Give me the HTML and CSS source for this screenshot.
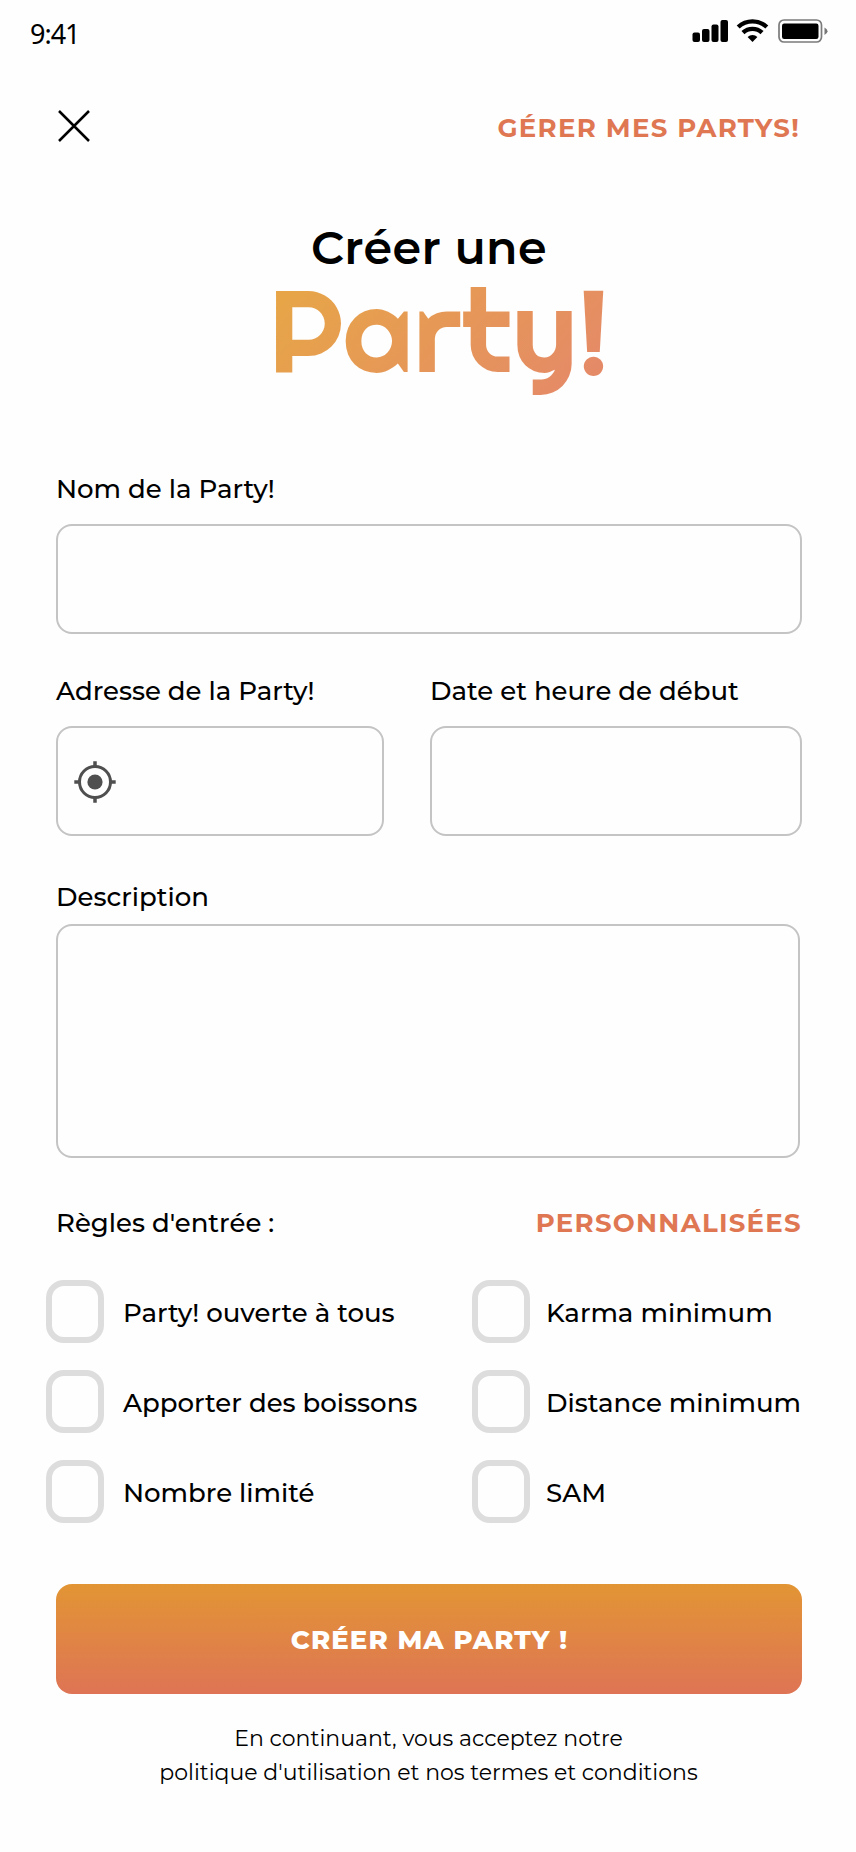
FILE: index.html
```
<!DOCTYPE html>
<html lang="fr">
<head>
<meta charset="utf-8">
<title>Créer une Party!</title>
<link rel="stylesheet" href="styles.css">
</head>
<body>
<div class="status">
  <span class="time">9:41</span>
  <svg class="status-icons" width="137" height="26" viewBox="0 0 137 26">
    <rect x="1.500" y="14.5" width="7.5" height="9.5" rx="2"/>
    <rect x="11" y="11" width="7.5" height="13" rx="2"/>
    <rect x="20.500" y="6.500" width="7" height="17.500" rx="2"/>
    <rect x="29.500" y="2" width="7.5" height="22" rx="2"/>
    <g fill="none" stroke="#000" stroke-width="4.4">
      <path d="M47.2 9a21 21 0 0 1 28.6 0"/>
      <path d="M52 14.7a13.8 13.8 0 0 1 19 0"/>
    </g>
    <path d="M61.5 24l-4.9-5a7.2 7.2 0 0 1 9.8 0z"/>
    <rect x="88" y="2" width="42.5" height="22" rx="5" fill="none" stroke="#7b7b7b" stroke-width="1.7"/>
    <rect x="91" y="5.500" width="36.5" height="15.500" rx="2.2"/>
    <path d="M133.500 9.500v7.5q3-1.3 3-3.7t-3-3.800z" fill="#777"/>
  </svg>
</div>
<main class="page">
  <header class="top">
    <svg class="close" width="34" height="32" viewBox="0 0 34 32"><path d="M2 1l30 30M32 1l-30 30" stroke="#000" stroke-width="2.5" fill="none"/></svg>
    <a class="link">GÉRER MES PARTYS!</a>
  </header>
  <h1 class="title"><span class="title-small">Créer une</span><span class="title-big">Party!</span></h1>
  <div class="field">
    <label class="label">Nom de la Party!</label>
    <div class="input"></div>
  </div>
  <div class="pair">
    <div class="field">
      <label class="label">Adresse de la Party!</label>
      <div class="input"><svg class="locate" width="42" height="42" viewBox="0 0 42 42"><g fill="none" stroke="#4f4f4f" stroke-width="3"><circle cx="21" cy="21" r="15.500"/><path d="M21 .3v6M21 35.700v6M.3 21h6M35.700 21h6" stroke-width="3.500"/></g><circle cx="21" cy="21" r="7.600" fill="#4f4f4f"/></svg></div>
    </div>
    <div class="field">
      <label class="label">Date et heure de début</label>
      <div class="input"></div>
    </div>
  </div>
  <div class="field description">
    <label class="label">Description</label>
    <div class="input area"></div>
  </div>
  <div class="rules-head"><span class="label">Règles d'entrée :</span><a class="link">PERSONNALISÉES</a></div>
  <div class="rules">
    <div class="rule"><span class="box"></span>Party! ouverte à tous</div>
    <div class="rule"><span class="box"></span>Karma minimum</div>
    <div class="rule"><span class="box"></span>Apporter des boissons</div>
    <div class="rule"><span class="box"></span>Distance minimum</div>
    <div class="rule"><span class="box"></span>Nombre limité</div>
    <div class="rule"><span class="box"></span>SAM</div>
  </div>
  <div class="button">CRÉER MA PARTY !</div>
  <p class="legal">En continuant, vous acceptez notre<br>politique d'utilisation et nos termes et conditions</p>
</main>
</body>
</html>
```

FILE: styles.css
```
* { box-sizing: border-box; }
body {
  margin: 0;
  min-height: 1852px;
  background: #fefefe;
  color: #000;
  font: 500 26px/32px Montserrat, Inter, sans-serif;
}
.status {
  display: flex;
  justify-content: space-between;
  align-items: flex-start;
  height: 110px;
  padding: 18px 28px 0 30px;
}
.time {
  font: 400 27px/32px "Noto Sans", "Open Sans", sans-serif;
  letter-spacing: -1px;
}
.page { padding: 0 54px 0 56px; }
.top {
  display: flex;
  justify-content: space-between;
  height: 32px;
}
.close { margin-left: 1px; }
.link {
  color: #e07753;
  font-weight: 700;
  letter-spacing: 1.3px;
}
.top .link { padding-top: 2px; margin-right: 2px; }
.title {
  display: flex;
  flex-direction: column;
  align-items: center;
  height: 253px;
  margin: 78px 0 0;
  font-weight: 600;
}
.title-small {
  font-size: 46px;
  line-height: 56px;
  letter-spacing: .4px;
}
.title-big {
  margin: -6px 0 0 20px;
  padding: 0 2px 10px;
  font: 400 116px/120px Righteous, Montserrat, sans-serif;
  background: linear-gradient(135deg, #e7a548 10%, #e58a67 90%);
  -webkit-background-clip: text;
  background-clip: text;
  color: transparent;
}
.field {
  display: flex;
  flex-direction: column;
  gap: 19px;
}
.input {
  display: flex;
  align-items: center;
  height: 110px;
  padding: 2px 0 0 16px;
  border: 2px solid #c4c4c4;
  border-radius: 16px;
}
.pair {
  display: grid;
  grid-template-columns: 328px 372px;
  gap: 46px;
  margin-top: 41px;
}
.description {
  gap: 11px;
  margin: 45px 2px 0 0;
}
.area { height: 234px; }
.rules-head {
  display: flex;
  justify-content: space-between;
  margin-top: 49px;
}
.rules {
  display: grid;
  grid-template-columns: 426px 1fr;
  gap: 26px 0;
  margin: 41px -10px 0 -10px;
}
.rule {
  display: flex;
  align-items: center;
  gap: 19px;
  height: 64px;
  padding-top: 1px;
  white-space: nowrap;
}
.rule:nth-child(even) { gap: 16px; }
.box {
  width: 58px;
  height: 63px;
  margin-top: -2px;
  border: 6px solid #ddd;
  border-radius: 18px;
}
.button {
  height: 110px;
  margin-top: 60px;
  padding-left: 1px;
  border-radius: 16px;
  background: linear-gradient(#e29534, #de7455);
  color: #fff;
  font-weight: 800;
  line-height: 113px;
  letter-spacing: 1.1px;
  text-align: center;
}
.legal {
  margin: 28px 0 0 -1px;
  font-weight: 400;
  font-size: 22px;
  line-height: 34px;
  text-align: center;
}
```
